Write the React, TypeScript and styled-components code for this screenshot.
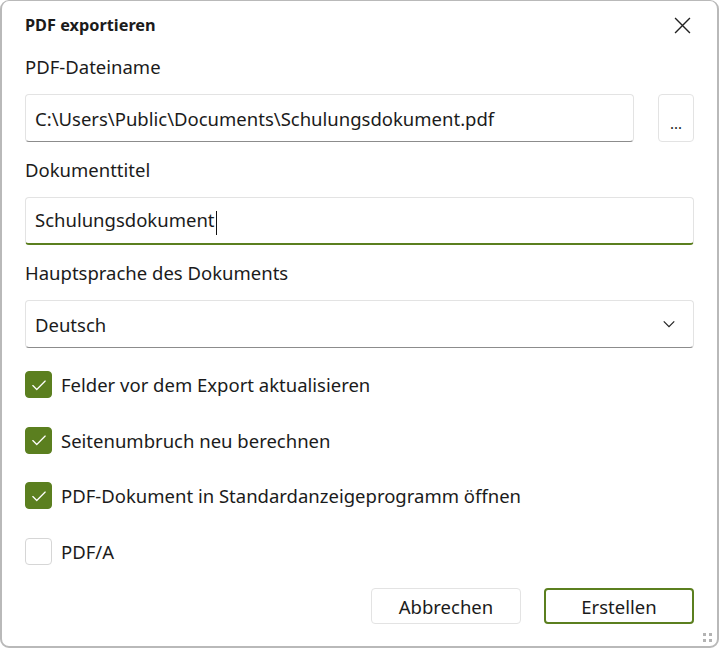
import React, { useState } from "react";
import styled, { createGlobalStyle } from "styled-components";

const colors = {
  text: "#1b1b1b",
  green: "#5b7f1f",
  border: "#e3e3e3",
  borderBottom: "#8c8c8c",
  frame: "#b9b9b9",
};

const GlobalStyle = createGlobalStyle`
  html, body {
    margin: 0;
    padding: 0;
    background: #ffffff;
  }
  body {
    font-family: "Noto Sans", "Open Sans", sans-serif;
    color: ${colors.text};
  }
  * {
    box-sizing: border-box;
  }
`;

const Window = styled.div`
  width: 719px;
  height: 648px;
  background: #ffffff;
  border: 2px solid ${colors.frame};
  border-top-width: 1px;
  border-radius: 9px;
  display: flex;
  flex-direction: column;
  padding: 0 23px;
  position: relative;
`;

const TitleBar = styled.div`
  height: 38px;
  display: flex;
  align-items: center;
  justify-content: space-between;
  padding-top: 10px;
`;

const Title = styled.h1`
  margin: 0;
  font-size: 16.3px;
  font-weight: 700;
`;

const CloseButton = styled.button`
  width: 30px;
  height: 30px;
  margin-right: -3px;
  border: none;
  background: transparent;
  padding: 0;
  display: flex;
  align-items: center;
  justify-content: center;
  cursor: pointer;

  svg {
    width: 17px;
    height: 17px;
  }
`;

const Label = styled.div`
  font-size: 18.5px;
  height: 55px;
  display: flex;
  align-items: center;
  padding-bottom: 1px;
`;

const FieldRow = styled.div`
  display: flex;
  gap: 24px;
`;

const Field = styled.div<{ focused?: boolean }>`
  flex: 1;
  height: 48px;
  border: 1px solid ${colors.border};
  border-bottom: ${(p) =>
    p.focused ? `2px solid ${colors.green}` : `1px solid ${colors.borderBottom}`};
  border-radius: 4px;
  display: flex;
  align-items: center;
  justify-content: space-between;
  padding: ${(p) => (p.focused ? "1px 9px 0" : "0 9px")};
  font-size: 18.5px;
  background: #ffffff;
  white-space: nowrap;
`;

const Caret = styled.span`
  display: inline-block;
  width: 1px;
  height: 24px;
  background: #111;
  vertical-align: middle;
  margin-left: 1px;
`;

const BrowseButton = styled.button`
  width: 36px;
  height: 48px;
  border: 1px solid ${colors.border};
  border-radius: 4px;
  background: #ffffff;
  font-family: inherit;
  font-size: 15px;
  color: ${colors.text};
  padding: 10px 0 0;
`;

const Checks = styled.div`
  display: flex;
  flex-direction: column;
  gap: 28.5px;
  margin-top: 23px;
`;

const CheckRow = styled.label`
  display: flex;
  align-items: center;
  gap: 9px;
  height: 27px;
  font-size: 18.5px;
  cursor: pointer;
`;

const Box = styled.span<{ checked: boolean }>`
  width: 27px;
  height: 27px;
  flex: none;
  border-radius: 4px;
  background: ${(p) => (p.checked ? colors.green : "#ffffff")};
  border: 1px solid ${(p) => (p.checked ? colors.green : "#d6d6d6")};
  display: flex;
  align-items: center;
  justify-content: center;

  svg {
    width: 18px;
    height: 18px;
  }
`;

const Footer = styled.div`
  margin-top: auto;
  display: flex;
  justify-content: flex-end;
  gap: 23px;
  padding-bottom: 22px;
`;

const Button = styled.button<{ primary?: boolean }>`
  width: 150px;
  height: 36px;
  border-radius: 4px;
  background: #ffffff;
  border: ${(p) => (p.primary ? `2px solid ${colors.green}` : `1px solid ${colors.border}`)};
  font-family: inherit;
  font-size: 18.5px;
  color: ${colors.text};
  cursor: pointer;
  padding: 0;
`;

const Grip = styled.div`
  position: absolute;
  right: 5px;
  bottom: 4px;
  display: grid;
  grid-template-columns: 3px 3px;
  gap: 3px;

  span {
    width: 3px;
    height: 3px;
    background: #b3b3b3;
  }
`;

const CheckIcon = () => (
  <svg viewBox="0 0 16 16" fill="none" stroke="#ffffff" strokeWidth="1.1" strokeLinecap="round" strokeLinejoin="round">
    <path d="M2.5 8.5 L6 12 L13.5 4.5" />
  </svg>
);

const options = [
  { label: "Felder vor dem Export aktualisieren", checked: true },
  { label: "Seitenumbruch neu berechnen", checked: true },
  { label: "PDF-Dokument in Standardanzeigeprogramm öffnen", checked: true },
  { label: "PDF/A", checked: false },
];

export default function App() {
  const [checks, setChecks] = useState(options.map((o) => o.checked));

  return (
    <>
      <GlobalStyle />
      <Window>
        <TitleBar>
          <Title>PDF exportieren</Title>
          <CloseButton aria-label="Schließen">
            <svg viewBox="0 0 16 16" fill="none" stroke="#222" strokeWidth="1.3">
              <path d="M1 1 L15 15 M15 1 L1 15" />
            </svg>
          </CloseButton>
        </TitleBar>

        <Label>PDF-Dateiname</Label>
        <FieldRow>
          <Field>C:\Users\Public\Documents\Schulungsdokument.pdf</Field>
          <BrowseButton>...</BrowseButton>
        </FieldRow>

        <Label>Dokumenttitel</Label>
        <FieldRow>
          <Field focused>
            <span>
              Schulungsdokument
              <Caret />
            </span>
          </Field>
        </FieldRow>

        <Label>Hauptsprache des Dokuments</Label>
        <FieldRow>
          <Field>
            <span>Deutsch</span>
            <svg width="14" height="14" viewBox="0 0 16 16" fill="none" stroke="#222" strokeWidth="1.4" style={{ marginRight: 8 }}>
              <path d="M2 5 L8 11 L14 5" />
            </svg>
          </Field>
        </FieldRow>

        <Checks>
          {options.map((o, i) => (
            <CheckRow
              key={o.label}
              onClick={() => setChecks(checks.map((c, j) => (j === i ? !c : c)))}
            >
              <Box checked={checks[i]}>{checks[i] && <CheckIcon />}</Box>
              {o.label}
            </CheckRow>
          ))}
        </Checks>

        <Footer>
          <Button>Abbrechen</Button>
          <Button primary>Erstellen</Button>
        </Footer>
        <Grip>
          <span />
          <span />
          <span />
          <span />
        </Grip>
      </Window>
    </>
  );
}
